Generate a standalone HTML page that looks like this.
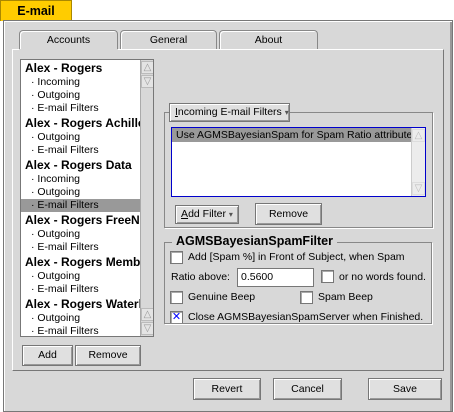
<!DOCTYPE html><html><head><style>
*{box-sizing:border-box;margin:0;padding:0}
body{width:454px;height:412px;background:#fff;font-family:"Liberation Sans","DejaVu Sans",sans-serif;font-size:10.5px;color:#000;position:relative;overflow:hidden}
.a{position:absolute}
.btn{position:absolute;background:#e0e0e0;border:1px solid #777;box-shadow:inset 1px 1px 0 #fff,inset -1px -1px 0 #999;text-align:center;font-size:10.5px}
.cb{position:absolute;width:13px;height:13px;background:#fff;border:1px solid #777;box-shadow:inset 1px 1px 0 #aaa}
.it{position:absolute;left:10px;font-size:10.5px}
.bd{position:absolute;left:4px;font-size:12px;font-weight:bold}
.sb{position:absolute;width:13px;height:13px;background:#e4e4e4;border:1px solid #bbb;color:#999;font-size:10px;line-height:11px;text-align:center}
</style></head><body>
<div class="a" style="left:0;top:0;width:72px;height:21px;background:#fc0;border:1px solid #a80;border-bottom:none;font-weight:bold;font-size:12.5px;text-align:center;line-height:20px">E-mail</div>
<div class="a" style="left:3px;top:20px;width:450px;height:392px;background:#d8d8d8;border:1px solid #777;box-shadow:inset 1px 1px 0 #fff,inset -2px 0 0 #999"></div>
<div class="a" style="left:19px;top:30px;width:99px;height:20px;background:#d8d8d8;border:1px solid #888;border-bottom:none;border-radius:4px 4px 0 0;box-shadow:inset 1px 1px 0 #fff;text-align:center;line-height:19px">Accounts</div>
<div class="a" style="left:120px;top:30px;width:97px;height:19px;background:#d8d8d8;border:1px solid #888;border-bottom:none;border-radius:4px 4px 0 0;box-shadow:inset 1px 1px 0 #fff;text-align:center;line-height:19px">General</div>
<div class="a" style="left:219px;top:30px;width:99px;height:19px;background:#d8d8d8;border:1px solid #888;border-bottom:none;border-radius:4px 4px 0 0;box-shadow:inset 1px 1px 0 #fff;text-align:center;line-height:19px">About</div>
<div class="a" style="left:12px;top:49px;width:432px;height:322px;border-left:1px solid #fff;border-top:1px solid #fff;border-right:1px solid #777;border-bottom:1px solid #777"></div>
<div class="a" style="left:19px;top:49px;width:99px;height:2px;background:#d8d8d8"></div>
<div class="a" style="left:20px;top:59px;width:134px;height:278px;border:1px solid #777;background:#fff;overflow:hidden">
<div class="a" style="left:0;top:139px;width:119px;height:13px;background:#999"></div>
<div class="bd" style="top:1px">Alex - Rogers</div>
<div class="it" style="top:16px">· Incoming</div>
<div class="it" style="top:29px">· Outgoing</div>
<div class="it" style="top:42px">· E-mail Filters</div>
<div class="bd" style="top:56px;white-space:nowrap">Alex - Rogers Achilles</div>
<div class="it" style="top:71px">· Outgoing</div>
<div class="it" style="top:84px">· E-mail Filters</div>
<div class="bd" style="top:98px">Alex - Rogers Data</div>
<div class="it" style="top:113px">· Incoming</div>
<div class="it" style="top:126px">· Outgoing</div>
<div class="it" style="top:139px">· E-mail Filters</div>
<div class="bd" style="top:153px;white-space:nowrap">Alex - Rogers FreeNet</div>
<div class="it" style="top:168px">· Outgoing</div>
<div class="it" style="top:181px">· E-mail Filters</div>
<div class="bd" style="top:195px;white-space:nowrap">Alex - Rogers Members</div>
<div class="it" style="top:210px">· Outgoing</div>
<div class="it" style="top:223px">· E-mail Filters</div>
<div class="bd" style="top:237px;white-space:nowrap">Alex - Rogers Waterloo</div>
<div class="it" style="top:252px">· Outgoing</div>
<div class="it" style="top:265px">· E-mail Filters</div>
<div class="a" style="left:119px;top:0;width:14px;height:276px;background:#d8d8d8;border-left:1px solid #aaa"></div>
<div class="sb" style="left:120px;top:1px">△</div>
<div class="sb" style="left:120px;top:15px">▽</div>
<div class="sb" style="left:120px;top:248px">△</div>
<div class="sb" style="left:120px;top:262px">▽</div>
</div>
<div class="btn" style="left:22px;top:345px;width:51px;height:21px;line-height:19px">Add</div>
<div class="btn" style="left:75px;top:345px;width:66px;height:21px;line-height:19px">Remove</div>
<div class="a" style="left:164px;top:112px;width:269px;height:116px;border:1px solid #888;box-shadow:1px 1px 0 #fff"></div>
<div class="btn" style="left:169px;top:103px;width:121px;height:19px;line-height:17px;text-align:left;padding-left:5px"><u>I</u>ncoming E-mail Filters <span style="font-size:8px;color:#555">▾</span></div>
<div class="a" style="left:171px;top:127px;width:255px;height:70px;border:1px solid #00c;background:#fff;overflow:hidden">
<div class="a" style="left:0;top:0;width:239px;height:14px;background:#999;padding-left:4px;line-height:14px;white-space:nowrap;overflow:hidden">Use AGMSBayesianSpam for Spam Ratio attribute</div>
<div class="a" style="left:239px;top:0;width:14px;height:68px;background:#ececec;border-left:1px solid #ccc"></div>
<div class="sb" style="left:240px;top:1px;border-color:#ddd;background:#ececec;color:#bbb">△</div>
<div class="sb" style="left:240px;top:54px;border-color:#ddd;background:#ececec;color:#bbb">▽</div>
</div>
<div class="btn" style="left:175px;top:205px;width:64px;height:19px;line-height:17px"><u>A</u>dd Filter <span style="font-size:8px;color:#555">▾</span></div>
<div class="btn" style="left:255px;top:203px;width:67px;height:22px;line-height:20px">Remove</div>
<div class="a" style="left:164px;top:242px;width:268px;height:82px;border:1px solid #888;box-shadow:1px 1px 0 #fff"></div>
<div class="a" style="left:172px;top:234px;background:#d8d8d8;padding:0 4px;font-weight:bold;font-size:12.5px">AGMSBayesianSpamFilter</div>
<div class="cb" style="left:170px;top:251px"></div>
<div class="a" style="left:188px;top:251px">Add [Spam %] in Front of Subject, when Spam</div>
<div class="a" style="left:171px;top:271px">Ratio above:</div>
<div class="a" style="left:237px;top:268px;width:77px;height:19px;background:#fff;border:1px solid #777;padding:2px 3px">0.5600</div>
<div class="cb" style="left:321px;top:270px"></div>
<div class="a" style="left:339px;top:271px">or no words found.</div>
<div class="cb" style="left:170px;top:291px"></div>
<div class="a" style="left:188px;top:291px">Genuine Beep</div>
<div class="cb" style="left:300px;top:291px"></div>
<div class="a" style="left:318px;top:291px">Spam Beep</div>
<div class="a" style="left:165px;top:310px;width:265px;height:13px;overflow:hidden">
<div class="cb" style="left:5px;top:1px;color:#00f;font-weight:bold;font-size:11px;line-height:10px;text-align:center">✕</div>
<div class="a" style="left:23px;top:1px;white-space:nowrap">Close AGMSBayesianSpamServer when Finished.</div></div>
<div class="btn" style="left:193px;top:378px;width:68px;height:22px;line-height:20px">Revert</div>
<div class="btn" style="left:273px;top:378px;width:69px;height:22px;line-height:20px">Cancel</div>
<div class="btn" style="left:368px;top:378px;width:74px;height:22px;line-height:20px">Save</div>
</body></html>
